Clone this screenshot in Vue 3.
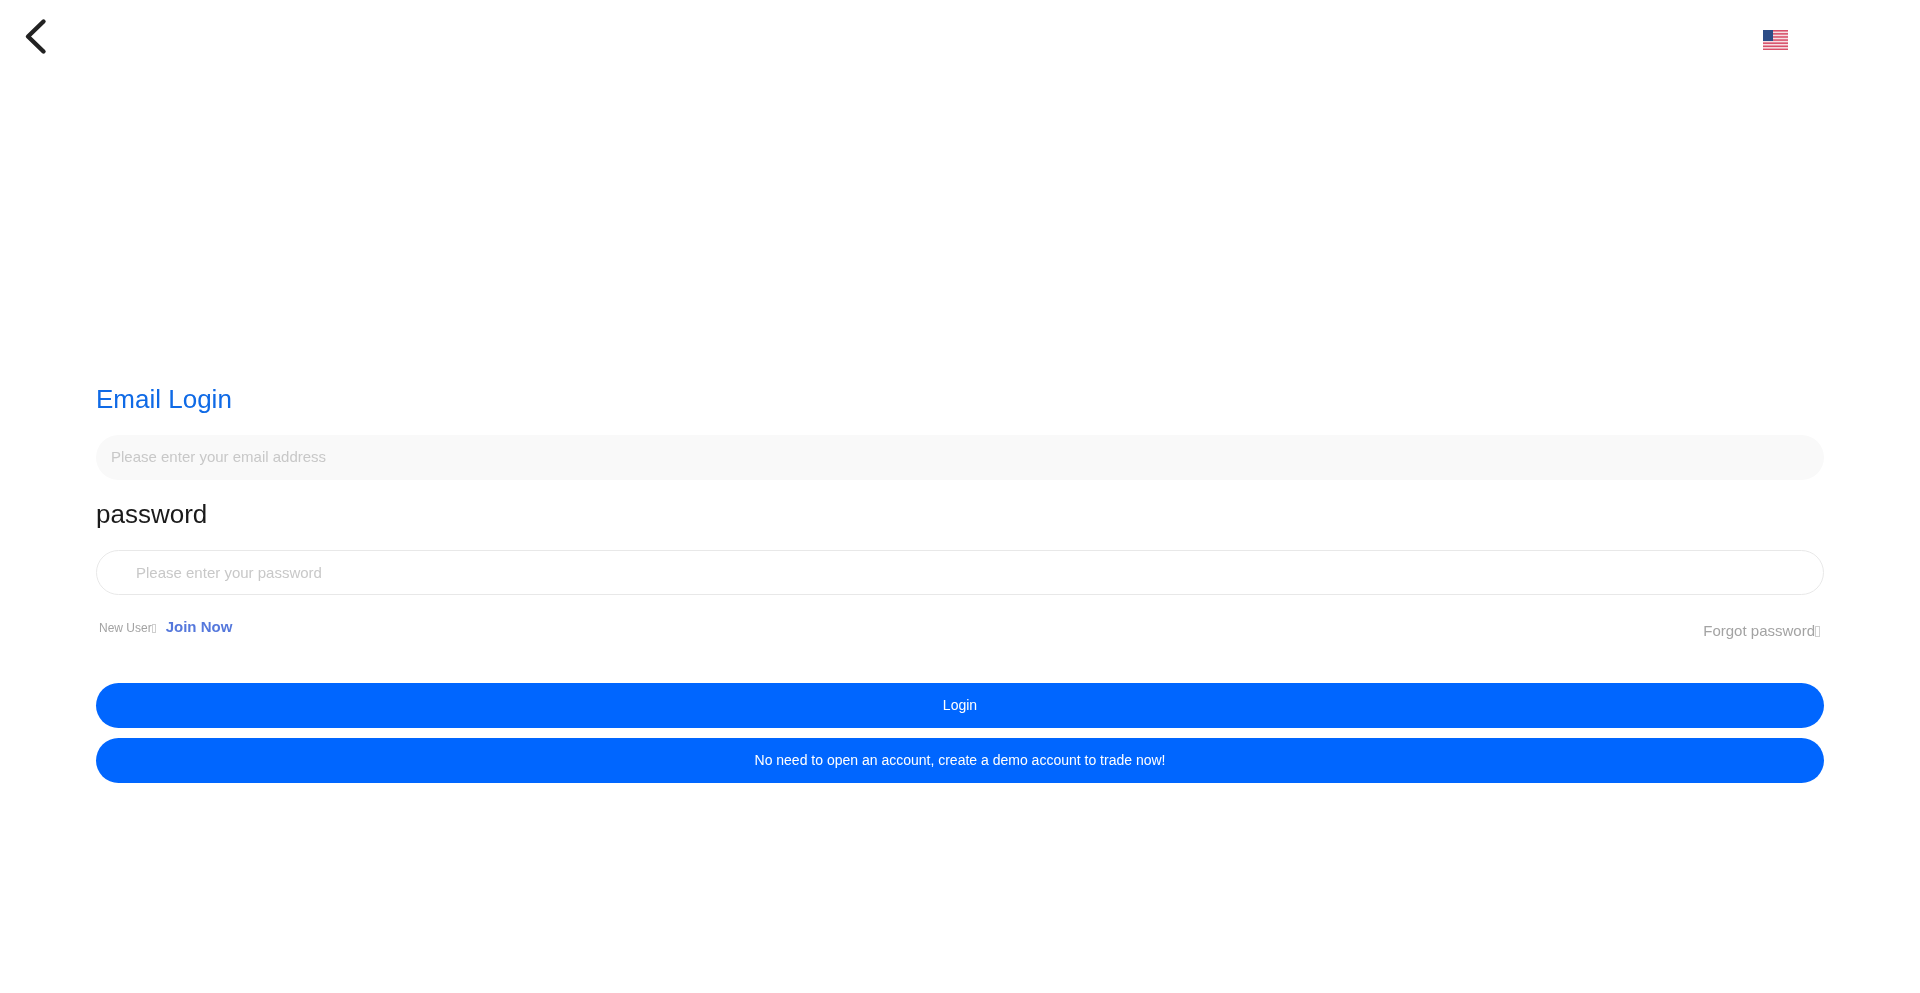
<template>
  <div class="page">
    <header class="topbar">
      <svg class="back" width="30" height="42" viewBox="0 0 30 42">
        <path d="M22.500 5.500 L7 20.500 L22.500 35.500" fill="none" stroke="#222" stroke-width="4.400" stroke-linecap="round" stroke-linejoin="round" />
      </svg>
      <svg class="flag" width="25" height="20" viewBox="0 0 25 20">
        <rect width="25" height="20" fill="#f6dfe3" />
        <rect v-for="i in stripes" :key="i" x="0" :y="(i - 1) * 3.100" width="25" height="1.550" fill="#d8506a" />
        <rect width="10" height="11" fill="#2c4c86" />
      </svg>
    </header>

    <main class="form">
      <h2 class="title">Email Login</h2>
      <input class="field filled" type="text" placeholder="Please enter your email address" />
      <h2 class="label">password</h2>
      <input class="field outlined" type="password" placeholder="Please enter your password" />

      <div class="links">
        <div class="join">
          <span class="new-user">New User<i class="tofu small"></i></span>
          <a class="join-link">Join Now</a>
        </div>
        <a class="forgot">Forgot password<i class="tofu"></i></a>
      </div>

      <button class="btn login">Login</button>
      <button class="btn">No need to open an account, create a demo account to trade now!</button>
    </main>
  </div>
</template>

<script setup>
const stripes = 7
</script>

<style>
html,
body {
  margin: 0;
  background: #fff;
}
</style>

<style scoped>
.page {
  min-height: 993px;
  font-family: "Liberation Sans", Arial, sans-serif;
  background: #fff;
}

.topbar {
  height: 80px;
  display: flex;
  align-items: flex-start;
  justify-content: space-between;
  padding: 16px 132px 0 21px;
}

.back {
  display: block;
}

.flag {
  display: block;
  margin-top: 14px;
}

.form {
  display: flex;
  flex-direction: column;
  padding: 287px 96px 0;
  will-change: transform;
}

.title,
.label {
  margin: 0;
  font-size: 26px;
  font-weight: 400;
  line-height: 32px;
}

.title {
  color: #0f6ae6;
}

.label {
  margin-top: 18px;
  color: #1a1a1a;
}

.field {
  height: 45px;
  box-sizing: border-box;
  border-radius: 23px;
  font-family: inherit;
  font-size: 15px;
  outline: none;
}

.field::placeholder {
  color: #c8c8c8;
  opacity: 1;
}

.filled {
  margin-top: 20px;
  padding: 0 15px 2px;
  border: none;
  background: #f9f9f9;
}

.outlined {
  margin-top: 20px;
  padding: 0 39px;
  border: 1px solid #e8e8e8;
  background: #fff;
}

.links {
  display: flex;
  justify-content: space-between;
  padding: 0 4px 0 3px;
  height: 88px;
}

.join {
  display: flex;
  align-items: center;
  gap: 10px;
  height: 20px;
  margin-top: 22px;
}

.new-user {
  margin-top: 2px;
  font-size: 12px;
  color: #a3a3a3;
}

.join-link {
  margin-bottom: 2px;
  font-size: 15px;
  font-weight: 700;
  color: #5578dc;
}

.forgot {
  margin-top: 25px;
  font-size: 15px;
  line-height: 22px;
  color: #a3a3a3;
}

.tofu {
  display: inline-block;
  box-sizing: border-box;
  width: 5px;
  height: 11px;
  border: 1px solid #cfcfcf;
  vertical-align: -1px;
}

.tofu.small {
  width: 4px;
  height: 9px;
}

.btn {
  height: 45px;
  padding: 0 0 2px;
  border: none;
  border-radius: 23px;
  background: #0066ff;
  color: #fff;
  font-family: inherit;
  font-size: 14px;
}

.login {
  margin-bottom: 10px;
}
</style>
